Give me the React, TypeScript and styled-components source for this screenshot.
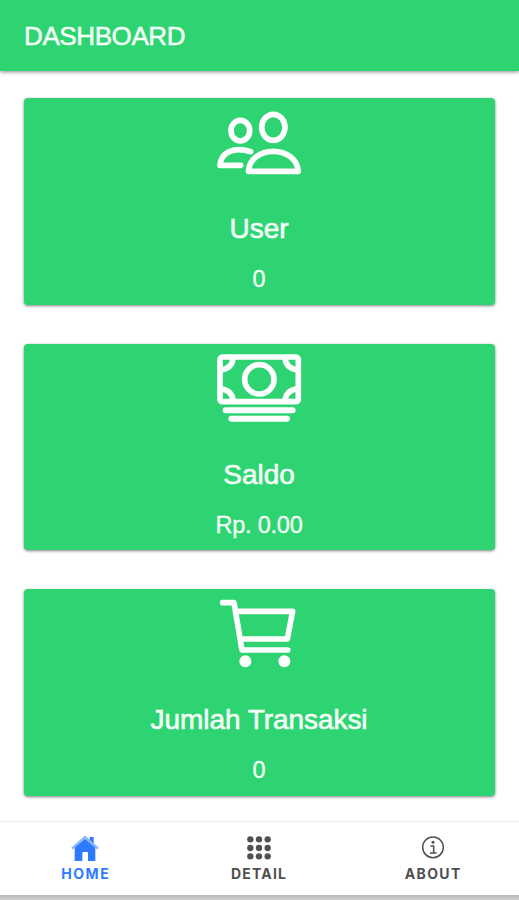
import React from "react";
import styled, { createGlobalStyle } from "styled-components";

const GlobalStyle = createGlobalStyle`
  body { margin: 0; background: #fff; }
  * { box-sizing: border-box; }
`;

const Screen = styled.div`
  height: 900px;
  width: 519px;
  display: flex;
  flex-direction: column;
  overflow: hidden;
  background: #fff;
  font-family: "Liberation Sans", Arial, sans-serif;
`;

const Header = styled.header`
  flex: none;
  height: 71px;
  padding-left: 24px;
  display: flex;
  align-items: center;
  background: #2ed471;
  box-shadow: 0 1px 4px rgba(0, 0, 0, 0.45);
`;

const Title = styled.h1`
  margin: 1px 0 0;
  font-size: 26px;
  line-height: 30px;
  font-weight: 400;
  letter-spacing: -0.4px;
  color: #f4fff8;
  -webkit-text-stroke: 0.5px #f4fff8;
`;

const Content = styled.main`
  flex: 1;
  min-height: 0;
  padding: 27px 24.5px 0 23.5px;
  display: flex;
  flex-direction: column;
  gap: 39px;
`;

const Card = styled.section`
  flex: none;
  height: 206.5px;
  display: flex;
  flex-direction: column;
  align-items: center;
  background: #2ed471;
  border-radius: 4px;
  box-shadow: 0 1px 3px rgba(0, 0, 0, 0.5);
  color: #f4fff8;
`;

const CardIcon = styled.svg`
  display: block;
  width: 120px;
  height: 80px;
  margin-left: 2px;
  fill: none;
  stroke: #fff;
  stroke-linecap: round;
  stroke-linejoin: round;
`;

const CardLabel = styled.h2`
  margin: 35px 0 0;
  font-size: 28px;
  line-height: 32px;
  font-weight: 400;
  letter-spacing: -0.05px;
  -webkit-text-stroke: 0.6px #f4fff8;
`;

const CardValue = styled.p`
  margin: 20px 0 0;
  font-size: 23.5px;
  line-height: 28px;
  letter-spacing: -0.2px;
  -webkit-text-stroke: 0.3px #f4fff8;
`;

const TabBar = styled.nav`
  flex: none;
  height: 74px;
  display: grid;
  grid-template-columns: 170px 177px 171px;
  border-top: 1px solid #ececec;
  background: #fff;
`;

const Tab = styled.a<{ $active?: boolean }>`
  display: flex;
  flex-direction: column;
  align-items: center;
  padding-top: 12px;
  color: ${(p) => (p.$active ? "#2f7bff" : "#505050")};
`;

const TabIcon = styled.svg`
  display: block;
  width: 30px;
  height: 28px;
  fill: currentColor;
`;

const TabLabel = styled.span<{ $spacing: number }>`
  margin-top: 3px;
  margin-right: ${(p) => -p.$spacing}px;
  font-family: Inter, sans-serif;
  font-size: 14px;
  line-height: 17px;
  font-weight: 700;
  letter-spacing: ${(p) => p.$spacing}px;
`;

const BottomEdge = styled.div`
  flex: none;
  height: 5px;
  background: linear-gradient(#b9b9b9, #d0d0d0);
`;

const PeopleIcon = () => (
  <CardIcon viewBox="0 22 360 240" strokeWidth={17}>
    <ellipse cx="220" cy="110" rx="35" ry="39" />
    <ellipse cx="121" cy="120" rx="28" ry="31" />
    <path d="M145 242H295C292 206 260 182 220 182S148 206 145 242Z" />
    <path d="M152 183C102 166 62 186 60 224H122" />
  </CardIcon>
);

const CashIcon = () => (
  <CardIcon viewBox="0 27 360 240" strokeWidth={17}>
    <rect x="60" y="66" width="235" height="134" rx="7" />
    <circle cx="178" cy="133" r="44" />
    <path d="M99 70Q97 99 63 105M255 70Q258 99 291 105M63 161Q97 167 99 196M291 161Q258 167 255 196" strokeLinecap="butt" />
    <path d="M77 226H278M94 251H261" strokeWidth="18" />
  </CardIcon>
);

const CartIcon = () => (
  <CardIcon viewBox="0 27 360 240" strokeWidth={17}>
    <path d="M68 68H102L126 210H263M110 94H278L262 177H122" />
    <g fill="#fff" stroke="none">
      <circle cx="136" cy="244" r="18" />
      <circle cx="253" cy="244" r="18" />
    </g>
  </CardIcon>
);

const HomeIcon = () => (
  <TabIcon viewBox="0 0 90 84">
    <path d="M59 9H71V31L59 21Z" />
    <path d="M14 40L45 14L76 40V81H54V57Q54 54 51 54H40Q37 54 37 57V81H14Z" />
    <path d="M6 44L45 9L84 44" fill="none" stroke="#8bb4fb" strokeWidth="7" />
  </TabIcon>
);

const GridIcon = () => (
  <TabIcon viewBox="0 0 90 84">
    {[16, 42, 67].map((y) =>
      [19, 45, 71].map((x) => <circle key={`${x}-${y}`} cx={x} cy={y} r="9.5" />),
    )}
  </TabIcon>
);

const InfoIcon = () => (
  <TabIcon viewBox="0 0 90 84">
    <circle cx="45" cy="40" r="31" fill="none" stroke="currentColor" strokeWidth="4.5" />
    <circle cx="45" cy="25" r="4.5" />
    <path d="M37 36H47V56M36 57H56" fill="none" stroke="currentColor" strokeWidth="4.5" />
  </TabIcon>
);

const cards = [
  { label: "User", value: "0", Icon: PeopleIcon },
  { label: "Saldo", value: "Rp. 0.00", Icon: CashIcon },
  { label: "Jumlah Transaksi", value: "0", Icon: CartIcon },
];

const tabs = [
  { label: "HOME", Icon: HomeIcon, active: true, spacing: 1.5 },
  { label: "DETAIL", Icon: GridIcon, active: false, spacing: 1.2 },
  { label: "ABOUT", Icon: InfoIcon, active: false, spacing: 1.4 },
];

export default function App() {
  return (
    <>
      <GlobalStyle />
      <Screen>
        <Header>
          <Title>DASHBOARD</Title>
        </Header>
        <Content>
          {cards.map(({ label, value, Icon }) => (
            <Card key={label}>
              <Icon />
              <CardLabel>{label}</CardLabel>
              <CardValue>{value}</CardValue>
            </Card>
          ))}
        </Content>
        <TabBar>
          {tabs.map(({ label, Icon, active, spacing }) => (
            <Tab key={label} $active={active}>
              <Icon />
              <TabLabel $spacing={spacing}>{label}</TabLabel>
            </Tab>
          ))}
        </TabBar>
        <BottomEdge />
      </Screen>
    </>
  );
}
